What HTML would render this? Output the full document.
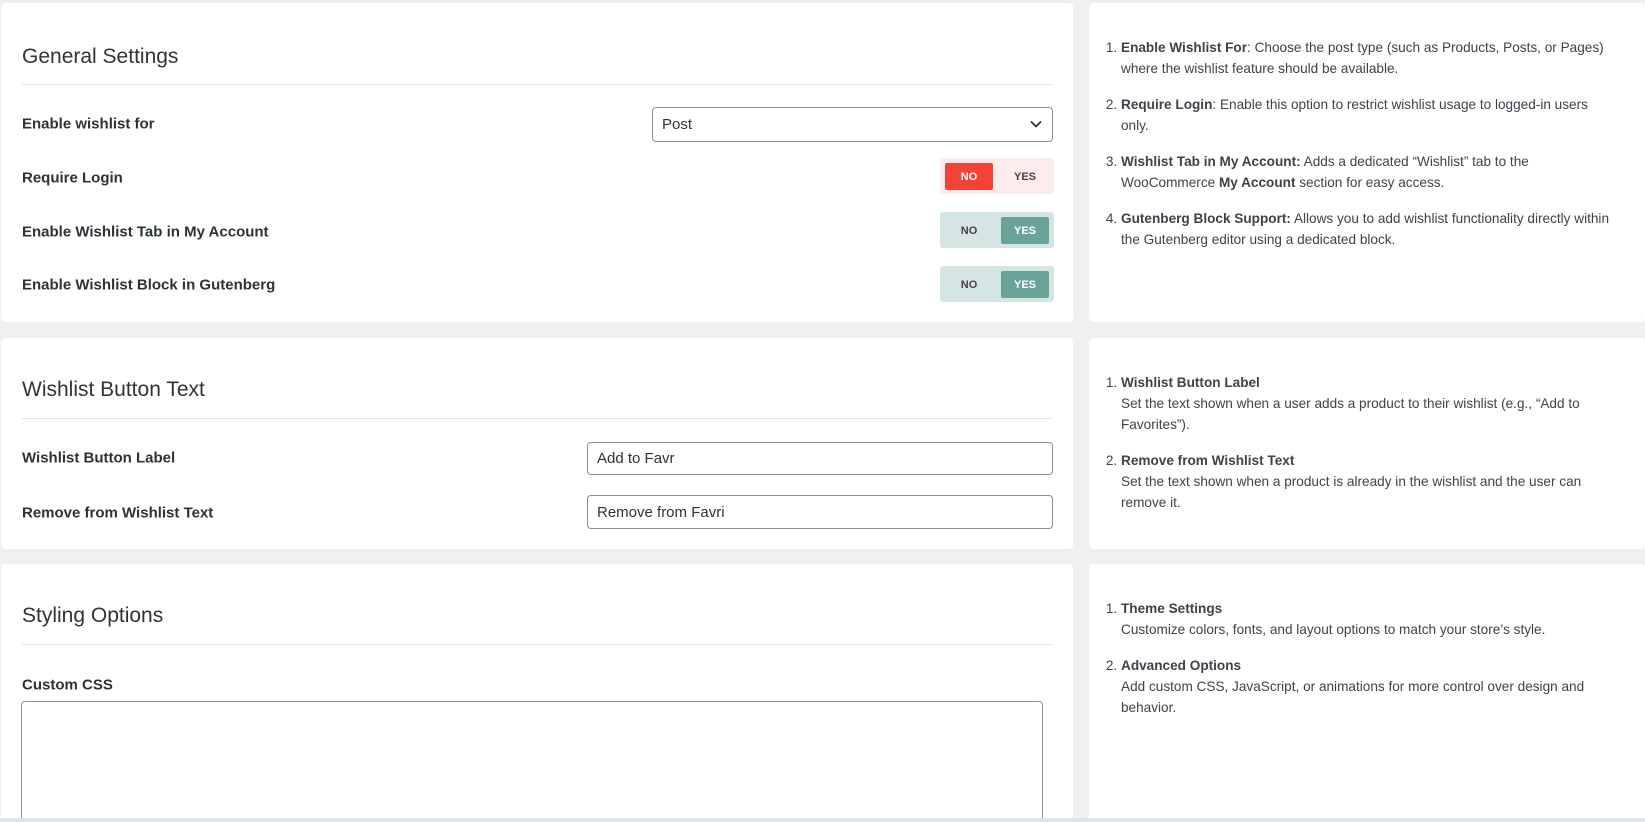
<!DOCTYPE html>
<html><head><meta charset="utf-8"><style>
*{box-sizing:border-box;margin:0;padding:0}
body{width:1645px;height:822px;background:#f0f0f0;font-family:"Liberation Sans",sans-serif;color:#2c3338;position:relative;overflow:hidden}
.card{position:absolute;background:#fff;border-radius:4px;overflow:hidden}
h2{position:absolute;left:21px;font-weight:400;font-size:21px;color:#333}
.hr{position:absolute;left:21px;right:21px;height:1px;background:#e2e4e7}
.lab{position:absolute;left:21px;font-weight:bold;font-size:15px;color:#2c3338;transform:translateY(-50%)}
.sel,.inp{position:absolute;border:1px solid #8c8f94;border-radius:4px;background:#fff;font-size:15px;padding-left:9px;display:flex;align-items:center;color:#2c3338}
.tg{position:absolute;left:939px;width:114px;height:36px;border-radius:3px;font-size:11px;font-weight:bold}
.tg span{position:absolute;top:5px;width:48px;height:27px;border-radius:2px;display:flex;align-items:center;justify-content:center}
.off{background:#fdeceb}.off .a{left:5px;background:#f44336;color:#fff}.off .b{left:61px;color:#444}
.on{background:#d5e5e3}.on .a{left:5px;color:#444}.on .b{left:61px;background:#6aa39a;color:#fff}
ol{position:absolute;left:1107px;width:515px;font-size:13.6px;line-height:21px;color:#3c434a;padding-left:14px}
ol li{margin-bottom:15px}
</style></head><body>
<div class="card" style="left:1px;top:3px;width:1072px;height:319px">
<h2 style="top:42px">General Settings</h2><div class="hr" style="top:81px"></div>
<div class="lab" style="top:121px">Enable wishlist for</div>
<div class="sel" style="left:651px;top:104px;width:401px;height:35px">Post<svg style="position:absolute;right:10px;top:12px" width="12" height="8" viewBox="0 0 12 8"><path d="M1 1.5l5 5 5-5" fill="none" stroke="#333" stroke-width="1.8"/></svg></div>
<div class="lab" style="top:175px">Require Login</div>
<div class="tg off" style="top:155px"><span class="a">NO</span><span class="b">YES</span></div>
<div class="lab" style="top:229px">Enable Wishlist Tab in My Account</div>
<div class="tg on" style="top:209px"><span class="a">NO</span><span class="b">YES</span></div>
<div class="lab" style="top:282px">Enable Wishlist Block in Gutenberg</div>
<div class="tg on" style="top:263px"><span class="a">NO</span><span class="b">YES</span></div>
</div>
<div class="card" style="left:1089px;top:3px;width:556px;height:319px"></div>
<ol style="top:37px"><li><b>Enable Wishlist For</b>: Choose the post type (such as Products, Posts, or Pages) where the wishlist feature should be available.</li><li><b>Require Login</b>: Enable this option to restrict wishlist usage to logged-in users<br>only.</li><li><b>Wishlist Tab in My Account:</b> Adds a dedicated “Wishlist” tab to the WooCommerce <b>My Account</b> section for easy access.</li><li><b>Gutenberg Block Support:</b> Allows you to add wishlist functionality directly within the Gutenberg editor using a dedicated block.</li></ol>

<div class="card" style="left:1px;top:338px;width:1072px;height:211px">
<h2 style="top:40px">Wishlist Button Text</h2><div class="hr" style="top:80px"></div>
<div class="lab" style="top:120px">Wishlist Button Label</div>
<div class="inp" style="left:586px;top:104px;width:466px;height:33px">Add to Favr</div>
<div class="lab" style="top:175px">Remove from Wishlist Text</div>
<div class="inp" style="left:586px;top:157px;width:466px;height:34px">Remove from Favri</div>
</div>
<div class="card" style="left:1089px;top:338px;width:556px;height:211px"></div>
<ol style="top:372px"><li><b>Wishlist Button Label</b><br>Set the text shown when a user adds a product to their wishlist (e.g., “Add to Favorites”).</li><li><b>Remove from Wishlist Text</b><br>Set the text shown when a product is already in the wishlist and the user can remove it.</li></ol>

<div class="card" style="left:1px;top:564px;width:1072px;height:254px;border-radius:4px 4px 0 0">
<h2 style="top:40px">Styling Options</h2><div class="hr" style="top:80px"></div>
<div class="lab" style="top:121px">Custom CSS</div>
<div class="inp" style="left:20px;top:137px;width:1022px;height:130px"></div>
</div>
<div class="card" style="left:1089px;top:564px;width:556px;height:254px;border-radius:4px 4px 0 0"></div>
<ol style="top:598px"><li><b>Theme Settings</b><br>Customize colors, fonts, and layout options to match your store’s style.</li><li><b>Advanced Options</b><br>Add custom CSS, JavaScript, or animations for more control over design and behavior.</li></ol>
<div style="position:absolute;left:0;top:818px;width:1645px;height:4px;background:#dde3f3"></div>
</body></html>
